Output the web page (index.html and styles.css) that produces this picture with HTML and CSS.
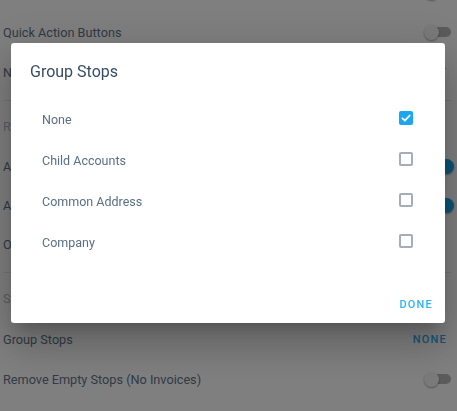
FILE: index.html
```html
<!DOCTYPE html>
<html lang="en">
<head>
<meta charset="utf-8">
<title>Group Stops</title>
<link rel="stylesheet" href="styles.css">
</head>
<body>
<div class="page">
  <div class="section first">
    <div class="row"><span class="label"></span><span class="switch"></span></div>
    <div class="row"><span class="label">Quick Action Buttons</span><span class="switch"></span></div>
    <div class="row"><span class="label">Navigation App</span><span class="value">DEFAULT</span></div>
  </div>
  <div class="section middle">
    <div class="header">Route Settings</div>
    <div class="row short"><span class="label">Auto Advance Stops</span><span class="switch on"></span></div>
    <div class="row short"><span class="label">Auto Optimize Route</span><span class="switch on"></span></div>
    <div class="row short"><span class="label">Optimization Mode</span></div>
  </div>
  <div class="section last">
    <div class="header">Stops</div>
    <div class="row"><span class="label">Group Stops</span><span class="value">NONE</span></div>
    <div class="row"><span class="label">Remove Empty Stops (No Invoices)</span><span class="switch"></span></div>
  </div>
</div>

<div class="scrim">
  <div class="dialog">
    <div class="dialog-title">Group Stops</div>
    <div class="options">
      <div class="option"><span>None</span><span class="check checked"><svg viewBox="0 0 14 14" width="14" height="14"><polyline points="3.4,7.3 5.9,9.7 10.7,4.5" fill="none" stroke="#fff" stroke-width="1.8" stroke-linecap="round" stroke-linejoin="round"/></svg></span></div>
      <div class="option"><span>Child Accounts</span><span class="check"></span></div>
      <div class="option"><span>Common Address</span><span class="check"></span></div>
      <div class="option"><span>Company</span><span class="check"></span></div>
    </div>
    <div class="actions"><span class="btn">DONE</span></div>
  </div>
</div>
</body>
</html>
```
FILE: styles.css
```css
* { box-sizing: border-box; }
html, body {
  margin: 0;
  padding: 0;
  background: #ffffff;
  font-family: Roboto, "Liberation Sans", sans-serif;
  overflow: hidden;
  height: 100%;
}
.page {
  padding: 0 6px 0 3px;
  color: #62758a;
  font-size: 12.7px;
}
.section.first {
  margin-top: -28px;
  padding-bottom: 8px;
  border-bottom: 1px solid #e8e8e8;
}
.section.middle {
  padding-top: 6px;
  padding-bottom: 8px;
  border-bottom: 1px solid #e8e8e8;
}
.section.last {
  padding-top: 6px;
}
.row {
  height: 40px;
  display: flex;
  align-items: center;
  justify-content: space-between;
}
.row.short { height: 39px; }
.header {
  height: 38px;
  margin-bottom: 2px;
  display: flex;
  align-items: center;
  color: #b2bcc7;
}
.value {
  font-size: 11px;
  font-weight: 500;
  letter-spacing: 1.2px;
  color: #2eaaea;
  margin-right: 4px;
}
.switch {
  position: relative;
  width: 27px;
  height: 15px;
  flex: none;
}
.switch::before {
  content: "";
  position: absolute;
  left: 3px;
  top: 2.5px;
  width: 24px;
  height: 10px;
  border-radius: 5px;
  background: #b7b7b7;
}
.switch::after {
  content: "";
  position: absolute;
  left: 0;
  top: 0;
  width: 15px;
  height: 15px;
  border-radius: 50%;
  background: #f4f4f4;
  box-shadow: 0 1px 2px rgba(0,0,0,0.35);
}
.switch.on::before { background: #8fd3f7; }
.switch.on::after { left: 15px; background: #17a6f2; }

.scrim {
  position: fixed;
  inset: 0;
  background: rgba(0,0,0,0.5);
  display: flex;
  justify-content: center;
  align-items: flex-start;
  padding-top: 43px;
}
.dialog {
  width: 434px;
  height: 280px;
  background: #ffffff;
  border-radius: 3px;
  box-shadow: 0 11px 15px -7px rgba(0,0,0,0.2), 0 24px 38px 3px rgba(0,0,0,0.14), 0 9px 46px 8px rgba(0,0,0,0.12);
  padding-top: 19px;
  display: flex;
  flex-direction: column;
  margin-left: -1px;
}
.dialog-title {
  height: 20px;
  line-height: 20px;
  font-size: 16px;
  color: #364d64;
  padding-left: 19px;
}
.options {
  margin-top: 16.5px;
  padding: 0 32px 0 31px;
}
.option {
  height: 41px;
  display: flex;
  align-items: center;
  justify-content: space-between;
  font-size: 12.5px;
  color: #5a6f85;
}
.check {
  width: 14px;
  height: 14px;
  border: 2px solid #a4aeb8;
  border-radius: 2px;
  margin-top: -2px;
  display: block;
}
.check.checked {
  border: none;
  background: #1aa6f2;
}
.check svg { display: block; }
.actions {
  margin-top: auto;
  display: flex;
  justify-content: flex-end;
  padding: 0 12px 3px 0;
}
.btn {
  height: 30px;
  line-height: 30px;
  font-size: 11px;
  font-weight: 500;
  letter-spacing: 1.2px;
  color: #2ab4f4;
}
```
